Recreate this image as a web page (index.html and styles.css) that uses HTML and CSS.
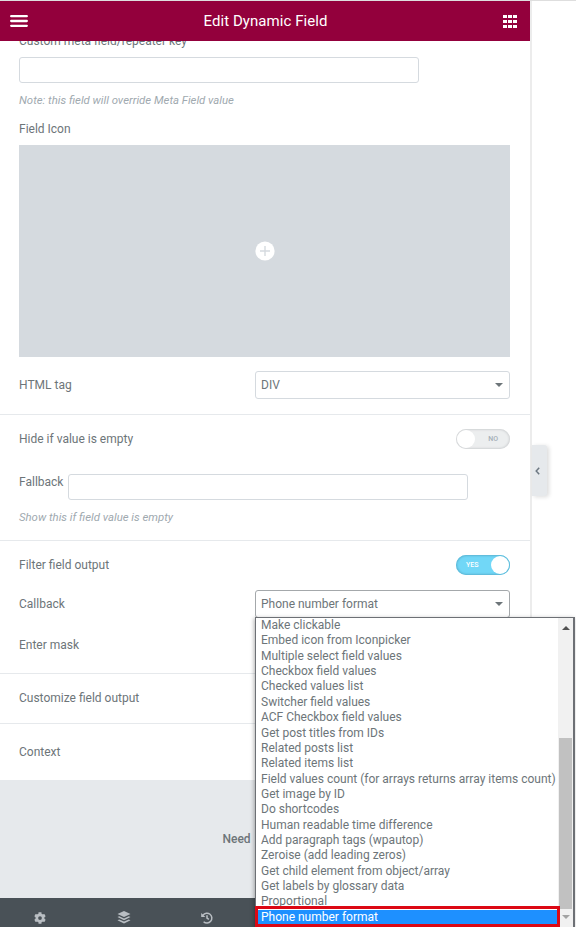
FILE: index.html
```html
<!DOCTYPE html>
<html lang="en">
<head>
<meta charset="utf-8">
<title>Edit Dynamic Field</title>
<link rel="stylesheet" href="styles.css">
</head>
<body>
<div class="app">
  <div class="panel">
    <header class="header">
      <svg class="burger" width="18" height="12" viewBox="0 0 18 12"><path d="M1.2 1.2h15.6M1.2 6h15.6M1.2 10.8h15.6" stroke="#fff" stroke-width="2.3" stroke-linecap="round"/></svg>
      <h1 class="title">Edit Dynamic Field</h1>
      <svg class="apps" width="14" height="13" viewBox="0 0 14 13" fill="#fff"><path d="M0 0h4v3H0zM5 0h4v3H5zM10 0h4v3h-4zM0 5h4v3H0zM5 5h4v3H5zM10 5h4v3h-4zM0 10h4v3H0zM5 10h4v3H5zM10 10h4v3h-4z"/></svg>
    </header>
    <main class="content">
      <section class="section media-section">
        <div class="label meta-label">Custom meta field/repeater key</div>
        <div class="input"></div>
        <div class="note">Note: this field will override Meta Field value</div>
        <div class="label icon-label">Field Icon</div>
        <div class="media"><svg width="20" height="20" viewBox="0 0 20 20"><circle cx="10" cy="10" r="9.6" fill="#fff"/><path d="M10 5v10M5 10h10" stroke="#d5dadf" stroke-width="1.4"/></svg></div>
        <div class="row tag-row"><span class="label">HTML tag</span><div class="select"><span>DIV</span><i class="caret"></i></div></div>
      </section>
      <section class="section empty-section">
        <div class="row"><span class="label">Hide if value is empty</span><div class="switch"><i class="knob"></i><span>NO</span></div></div>
        <div class="fallback"><span class="label">Fallback</span><div class="input"></div></div>
        <div class="note">Show this if field value is empty</div>
      </section>
      <section class="section filter-section">
        <div class="row"><span class="label">Filter field output</span><div class="switch on"><span>YES</span><i class="knob"></i></div></div>
        <div class="row callback-row"><span class="label">Callback</span><div class="select focus"><span>Phone number format</span><i class="caret"></i></div></div>
        <div class="label">Enter mask</div>
      </section>
      <section class="section customize-section"><span class="label">Customize field output</span></section>
      <section class="section context-section"><span class="label">Context</span></section>
    </main>
    <div class="help">Need</div>
    <footer class="footer">
      <svg width="12" height="12" viewBox="0 0 512 512" fill="#b9bec3"><path fill-rule="evenodd" d="M487 316l-43-25a195 195 0 0 0 0-70l43-25c5-3 7-9 5-14-11-36-30-68-54-95-4-4-10-5-15-2l-43 25a190 190 0 0 0-61-35V25c0-6-4-11-9-12a250 250 0 0 0-110 0c-5 1-9 6-9 12v50a194 194 0 0 0-61 35L88 85c-5-3-11-2-15 2a247 247 0 0 0-54 95c-2 5 0 11 5 14l43 25a195 195 0 0 0 0 70l-43 25c-5 3-7 9-5 14 11 36 30 68 54 95 4 4 10 5 15 2l43-25a190 190 0 0 0 61 35v50c0 6 4 11 9 12 36 8 74 8 110 0 5-1 9-6 9-12v-50a194 194 0 0 0 61-35l43 25c5 3 11 2 15-2a247 247 0 0 0 54-95c1-5-1-11-6-14zM256 336a80 80 0 1 1 0-160 80 80 0 0 1 0 160z"/></svg>
      <svg width="14" height="13" viewBox="0 0 14 13" fill="#b9bec3"><path d="M7 0l6.500 3L7 6 .5 3zM2.200 5.200L7 7.400l4.800-2.200 1.700.9L7 9.200.5 6.100zM2.200 8.400L7 10.600l4.800-2.200 1.700.9L7 12.400.5 9.300z"/></svg>
      <svg width="12" height="12" viewBox="0 0 12 12" fill="none" stroke="#b9bec3" stroke-width="1.5"><path d="M2 3.200A4.900 4.900 0 1 1 2.600 9.700M6 3.200v3l1.900 1.200"/><path d="M.2.900v4.200h4.200z" fill="#b9bec3" stroke="none"/></svg>
    </footer>
    <div class="list">
      <ul class="options">
        <li>Make clickable</li><li>Embed icon from Iconpicker</li><li>Multiple select field values</li><li>Checkbox field values</li><li>Checked values list</li><li>Switcher field values</li><li>ACF Checkbox field values</li><li>Get post titles from IDs</li><li>Related posts list</li><li>Related items list</li><li>Field values count (for arrays returns array items count)</li><li>Get image by ID</li><li>Do shortcodes</li><li>Human readable time difference</li><li>Add paragraph tags (wpautop)</li><li>Zeroise (add leading zeros)</li><li>Get child element from object/array</li><li>Get labels by glossary data</li><li>Proportional</li><li class="selected">Phone number format</li>
      </ul>
      <div class="scrollbar"><i class="arrow up"></i><i class="thumb"></i><i class="arrow down"></i></div>
      <div class="highlight"></div>
    </div>
  </div>
  <div class="preview"><div class="toggle"><svg width="5" height="8" viewBox="0 0 5 8"><path d="M4.200.8L1.200 4l3 3.200" fill="none" stroke="#6d7882" stroke-width="1.500"/></svg></div></div>
</div>
</body>
</html>
```
FILE: styles.css
```css
* { box-sizing: border-box; }
body { margin: 0; background: #fff; color: #6d7579; font: 12px/16px Roboto, "Liberation Sans", sans-serif; }
.app { display: flex; height: 927px; overflow: hidden; border-top: 1px solid #dedede; }
.panel { position: relative; flex: none; width: 530px; display: flex; flex-direction: column; }
.header { flex: none; height: 40px; padding: 0 13px 0 10px; display: flex; align-items: center; justify-content: space-between; background: #93003c; }
.title { margin: 0; color: #fff; font-size: 15px; font-weight: 400; line-height: 20px; letter-spacing: .05px; }
.content { flex: none; height: 739px; overflow: hidden; }
.section { display: flow-root; border-bottom: 1px solid #e6e9ec; padding: 0 20px 0 19px; }
.label { white-space: nowrap; }
.media-section { height: 374px; }
.meta-label { margin-top: -8px; }
.input { width: 400px; height: 26px; border: 1px solid #d5dadf; border-radius: 3px; background: #fff; }
.meta-label + .input { margin-top: 8px; }
.note { margin-top: 9px; font-size: 11.36px; font-style: italic; color: #a0a9af; }
.icon-label { margin-top: 13px; }
.media { height: 212px; margin-top: 8px; background: #d5dadf; display: flex; align-items: center; justify-content: center; }
.row { display: flex; align-items: center; justify-content: space-between; }
.tag-row { margin-top: 14px; }
.select { width: 255px; height: 28px; border: 1px solid #d5dadf; border-radius: 3px; padding: 0 6px 0 5px; display: flex; align-items: center; justify-content: space-between; }
.select.focus { border-color: #a4a8ab; }
.caret { border: 4px solid transparent; border-top-color: #6d7579; border-bottom: 0; }
.empty-section { height: 126px; padding-top: 14px; }
.switch { width: 54px; height: 20px; border-radius: 10px; background: #eceeef; box-shadow: inset 0 0 2px 1px #d0d2d4; display: flex; align-items: center; justify-content: space-between; padding: 0 12px 0 1px; font-size: 7px; font-weight: 500; color: #a4afb7; }
.knob { width: 18px; height: 18px; border-radius: 50%; background: #fff; }
.switch.on { background: #71d7f7; box-shadow: inset 0 0 2px 1px #5bb4d2; color: #fff; padding: 0 1px 0 10px; }
.fallback { display: flex; gap: 5px; margin-top: 25px; }
.filter-section { height: 133px; padding-top: 14px; }
.callback-row { margin: 15px 0 19px; }
.customize-section { height: 50px; padding-top: 16px; }
.context-section { border: 0; padding-top: 20px; }
.help { flex: none; height: 118px; background: #e6e9ec; padding: 51px 0 0 222.5px; font-weight: 500; }
.footer { flex: none; height: 29px; background: #495157; display: flex; align-items: center; padding: 10px 0 0 34px; gap: 70.5px; }
.list { position: absolute; left: 255px; top: 616px; width: 320px; height: 311px; display: flex; border: 1px solid #6d7075; border-right-width: 2px; background: #fff; box-shadow: -1px 1px 4px rgba(0, 0, 0, .3); }
.options { flex: none; width: 302px; list-style: none; margin: 0; padding: 0; white-space: nowrap; line-height: 15.36px; }
.options li { height: 15.36px; padding-left: 5px; }
.selected { background: #1e90ff; color: #fff; }
.scrollbar { flex: none; width: 15px; background: #f1f1f1; display: flex; flex-direction: column; align-items: center; }
.arrow { border: 4px solid transparent; }
.up { border-bottom-color: #505050; border-top: 0; margin-top: 8px; }
.down { border-top-color: #a3a3a3; border-bottom: 0; margin-top: 6px; }
.thumb { width: 13px; height: 171px; margin-top: 108px; background: #c1c1c1; }
.highlight { position: absolute; left: -1px; top: 288px; width: 305px; height: 21px; border: 3px solid #dc0814; }
.preview { flex: 1; border-left: 2px solid #ececec; padding-top: 444px; }
.toggle { width: 15px; height: 51px; background: #e6e9ec; border-radius: 0 3px 3px 0; box-shadow: 2px 1px 4px rgba(0, 0, 0, .14); display: flex; align-items: center; padding-left: 3px; }
```
